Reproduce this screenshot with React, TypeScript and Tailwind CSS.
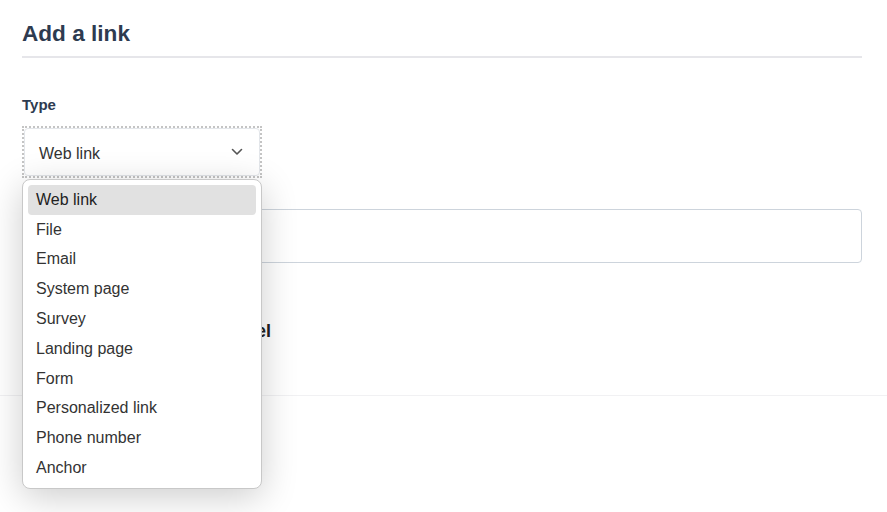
const TYPES = [
  "Web link",
  "File",
  "Email",
  "System page",
  "Survey",
  "Landing page",
  "Form",
  "Personalized link",
  "Phone number",
  "Anchor",
];

export default function App() {
  return (
    <div className="min-h-screen bg-white font-['Liberation_Sans',Arial,sans-serif] text-[#333]">
      <div className="px-[22px] pt-[21px] pr-[25px]">
        {/* Header */}
        <h2 className="text-[22.6px] leading-[26px] font-bold text-[#2e3b50] pb-[9px] border-b-2 border-[#e6e6ea]">
          Add a link
        </h2>

        {/* Type select */}
        <div className="mt-[37px] relative">
          <label className="block text-[15px] leading-[20px] font-bold text-[#2e3b50]">Type</label>
          <div className="mt-[11px] w-[240px] h-[52px] border-2 border-dotted border-[#c4c4c4]">
            <div className="h-full flex items-center justify-between pl-[14px] pr-[16px] pt-[4px] rounded-[4px] border border-[#e3e6ea] bg-white">
              <span className="text-[16px] text-[#333]">Web link</span>
              <svg width="12" height="8" viewBox="0 0 12 8" fill="none" className="-mt-[4px]">
                <path d="M1.5 1.5L6 6L10.5 1.5" stroke="#555" strokeWidth="1.6" strokeLinecap="round" strokeLinejoin="round" />
              </svg>
            </div>
          </div>

          {/* Dropdown */}
          <div className="absolute left-0 top-[84px] z-10 w-[240px] rounded-[8px] border border-[#c8c8c8] bg-white p-[5px] shadow-[0_8px_36px_rgba(0,0,0,0.2)]">
            {TYPES.map((t, i) => (
              <div
                key={t}
                className={
                  i === 0
                    ? "h-[29.8px] flex items-center px-[8px] rounded-[4px] bg-[#e1e1e1] text-[16px] text-[#222]"
                    : "h-[29.8px] flex items-center px-[8px] text-[16px] text-[#333]"
                }
              >
                {t}
              </div>
            ))}
          </div>
        </div>

        {/* URL */}
        <div className="mt-[8px]">
          <label className="block text-[14px] leading-[20px] font-bold text-[#2e3b50]">URL</label>
          <input className="mt-[3px] block w-full h-[54px] rounded-[4px] border border-[#cdd4dc] px-[14px] outline-none" />
        </div>

        {/* Toggle */}
        <div className="mt-[55px] flex items-center gap-[12px]">
          <div className="w-[44px] h-[24px] rounded-full bg-[#4a2f9e] flex items-center justify-end pr-[3px]">
            <div className="w-[18px] h-[18px] rounded-full bg-white" />
          </div>
          <span className="text-[18px] font-bold text-[#222]">Add accessibility label</span>
        </div>
      </div>

      <div className="mt-[50px] border-t border-[#f1f1f3] h-[117px]" />
    </div>
  );
}
